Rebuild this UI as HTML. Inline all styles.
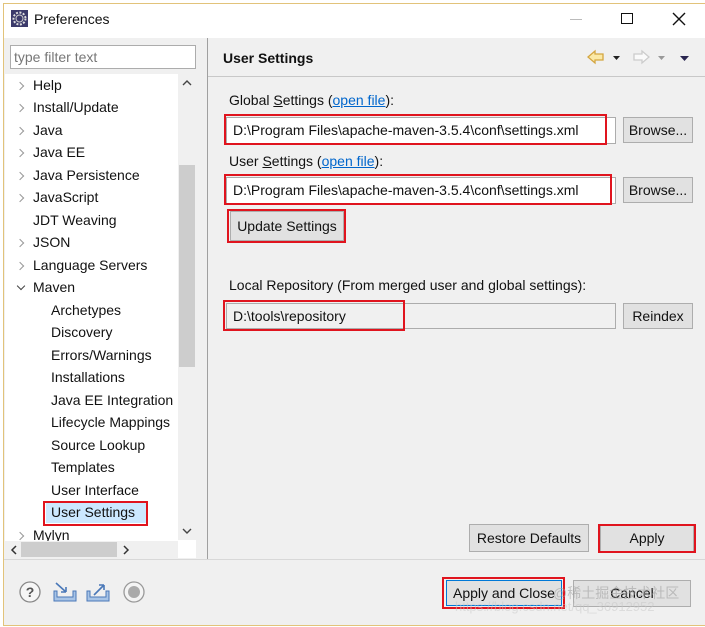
<!DOCTYPE html>
<html><head><meta charset="utf-8"><style>
*{box-sizing:border-box;margin:0;padding:0}
body{width:705px;height:627px;background:#fff;position:relative;overflow:hidden;font-family:"Liberation Sans","Noto Sans CJK SC",sans-serif;font-size:14px;color:#111}
.a{position:absolute;white-space:nowrap}
.red{position:absolute;border:2px solid #e0141e}
.btn{position:absolute;background:#e1e1e1;border:1px solid #adadad;text-align:center}
.inp{position:absolute;background:#fff;border:1px solid #acacac;padding-left:6px}
.t{position:absolute;white-space:nowrap;line-height:20px}
.ch{position:absolute;width:8px;height:10px;background:
 none}
.ch::before{content:"";position:absolute;left:0;top:2px;width:5px;height:5px;border-right:1.3px solid #999;border-bottom:1.3px solid #999;transform:rotate(-45deg)}
.dn::before{transform:rotate(45deg);top:0;border-color:#444}
u{text-decoration:underline}
a{color:#0066cc;text-decoration:underline}
</style></head><body>
<div class="a" style="left:3px;top:3px;width:702px;height:623px;border:1px solid #e2c37a;border-right:none;background:#f0f0f0"></div>
<div class="a" style="left:4px;top:4px;width:701px;height:34px;background:#fff"></div>
<svg class="a" style="left:11px;top:10px" width="17" height="17" viewBox="0 0 17 17"><rect x="0" y="0" width="17" height="17" fill="#3b3a6a"/><circle cx="8.5" cy="8.5" r="6" fill="none" stroke="#ddd" stroke-width="2" stroke-dasharray="2 1.5"/><circle cx="8.5" cy="8.5" r="3.5" fill="#3b3a6a" stroke="#ccc"/></svg>
<div class="t" style="left:34px;top:9px;font-size:14px">Preferences</div>
<div class="a" style="left:570px;top:19px;width:12px;height:1px;background:#bbb"></div>
<div class="a" style="left:621px;top:13px;width:12px;height:11px;border:1.5px solid #111"></div>
<svg class="a" style="left:672px;top:12px" width="14" height="14"><path d="M1 1L13 13M13 1L1 13" stroke="#111" stroke-width="1.4"/></svg>

<div class="a" style="left:5px;top:38px;width:202px;height:522px;background:#f0f0f0"></div>
<div class="inp" style="left:10px;top:45px;width:186px;height:24px;color:#777;line-height:22px;padding-left:3px">type filter text</div>
<div class="a" style="left:5px;top:74px;width:191px;height:484px;background:#fff"></div>
<div class="a" style="left:178px;top:74px;width:18px;height:466px;background:#f0f0f0"></div>
<div class="a" style="left:179px;top:165px;width:16px;height:202px;background:#cdcdcd"></div>
<svg class="a" style="left:181px;top:78px" width="12" height="10"><path d="M2 7L6 3L10 7" stroke="#444" stroke-width="1.4" fill="none"/></svg>
<svg class="a" style="left:181px;top:526px" width="12" height="10"><path d="M2 3L6 7L10 3" stroke="#444" stroke-width="1.4" fill="none"/></svg>
<div class="a" style="left:5px;top:541px;width:173px;height:17px;background:#f0f0f0"></div>
<div class="a" style="left:21px;top:542px;width:96px;height:15px;background:#cdcdcd"></div>
<svg class="a" style="left:9px;top:544px" width="10" height="12"><path d="M7 2L3 6L7 10" stroke="#333" stroke-width="1.5" fill="none"/></svg>
<svg class="a" style="left:121px;top:544px" width="10" height="12"><path d="M3 2L7 6L3 10" stroke="#333" stroke-width="1.5" fill="none"/></svg>

<div class="ch" style="left:17px;top:81px"></div><div class="t" style="left:33px;top:75px">Help</div>
<div class="ch" style="left:17px;top:103px"></div><div class="t" style="left:33px;top:97px">Install/Update</div>
<div class="ch" style="left:17px;top:126px"></div><div class="t" style="left:33px;top:120px">Java</div>
<div class="ch" style="left:17px;top:148px"></div><div class="t" style="left:33px;top:142px">Java EE</div>
<div class="ch" style="left:17px;top:171px"></div><div class="t" style="left:33px;top:165px">Java Persistence</div>
<div class="ch" style="left:17px;top:193px"></div><div class="t" style="left:33px;top:187px">JavaScript</div>
<div class="t" style="left:33px;top:210px">JDT Weaving</div>
<div class="ch" style="left:17px;top:238px"></div><div class="t" style="left:33px;top:232px">JSON</div>
<div class="ch" style="left:17px;top:261px"></div><div class="t" style="left:33px;top:255px">Language Servers</div>
<div class="ch dn" style="left:18px;top:283px"></div><div class="t" style="left:33px;top:277px">Maven</div>
<div class="t" style="left:51px;top:300px">Archetypes</div>
<div class="t" style="left:51px;top:322px">Discovery</div>
<div class="t" style="left:51px;top:345px">Errors/Warnings</div>
<div class="t" style="left:51px;top:367px">Installations</div>
<div class="t" style="left:51px;top:390px">Java EE Integration</div>
<div class="t" style="left:51px;top:412px">Lifecycle Mappings</div>
<div class="t" style="left:51px;top:435px">Source Lookup</div>
<div class="t" style="left:51px;top:457px">Templates</div>
<div class="t" style="left:51px;top:480px">User Interface</div>
<div class="a" style="left:46px;top:502px;width:100px;height:21px;background:#cce8ff"></div>
<div class="t" style="left:51px;top:502px">User Settings</div>
<div class="red" style="left:43px;top:501px;width:105px;height:25px"></div>
<div class="ch" style="left:17px;top:531px"></div><div class="t" style="left:33px;top:525px;height:16px;overflow:hidden">Mylyn</div>

<div class="a" style="left:207px;top:38px;width:1px;height:522px;background:#a0a0a0"></div>

<div class="t" style="left:223px;top:48px;font-weight:bold">User Settings</div>
<div class="a" style="left:208px;top:76px;width:497px;height:1px;background:#c8c8c8"></div>
<svg class="a" style="left:586px;top:48px" width="110" height="18" viewBox="0 0 110 18"><path d="M2 9L9 3V6H17V12H9V15Z" fill="#fbe9a6" stroke="#d4a640" stroke-width="1.3"/><path d="M27 8h7l-3.5 4z" fill="#222"/><path d="M63 9L56 3V6H48V12H56V15Z" fill="#fafafa" stroke="#ccc" stroke-width="1.3"/><path d="M72 8h7l-3.5 4z" fill="#999"/><path d="M94 8h9l-4.5 5z" fill="#2a2650"/></svg>

<div class="t" style="left:229px;top:90px">Global <u>S</u>ettings (<a>open file</a>):</div>
<div class="inp" style="left:226px;top:117px;width:390px;height:27px;line-height:25px">D:\Program Files\apache-maven-3.5.4\conf\settings.xml</div>
<div class="red" style="left:224px;top:114px;width:383px;height:31px"></div>
<div class="btn" style="left:623px;top:117px;width:70px;height:26px;line-height:24px">Browse...</div>

<div class="t" style="left:229px;top:151px">User <u>S</u>ettings (<a>open file</a>):</div>
<div class="inp" style="left:226px;top:177px;width:390px;height:27px;line-height:25px">D:\Program Files\apache-maven-3.5.4\conf\settings.xml</div>
<div class="red" style="left:224px;top:174px;width:388px;height:31px"></div>
<div class="btn" style="left:623px;top:177px;width:70px;height:26px;line-height:24px">Browse...</div>

<div class="btn" style="left:230px;top:211px;width:114px;height:30px;line-height:28px">Update Settings</div>
<div class="red" style="left:227px;top:209px;width:119px;height:34px"></div>

<div class="t" style="left:229px;top:275px">Local Repository (From merged user and global settings):</div>
<div class="inp" style="left:226px;top:303px;width:390px;height:26px;line-height:24px;background:#f0f0f0">D:\tools\repository</div>
<div class="red" style="left:223px;top:300px;width:182px;height:31px"></div>
<div class="btn" style="left:623px;top:303px;width:70px;height:26px;line-height:24px">Reindex</div>

<div class="btn" style="left:469px;top:524px;width:120px;height:28px;line-height:26px">Restore Defaults</div>
<div class="btn" style="left:600px;top:525px;width:94px;height:27px;line-height:25px">Apply</div>
<div class="red" style="left:598px;top:524px;width:98px;height:29px"></div>

<div class="a" style="left:4px;top:559px;width:701px;height:1px;background:#d8d8d8"></div>
<svg class="a" style="left:14px;top:579px" width="140" height="26" viewBox="0 0 140 26"><circle cx="16" cy="13" r="10" fill="#f6f6f6" stroke="#888" stroke-width="1.3"/><text x="16" y="18" font-family="Liberation Sans" font-weight="bold" font-size="14" fill="#555" text-anchor="middle">?</text><path d="M40 12v10h22V12h-3v6H43v-6z" fill="#a8c4e6" stroke="#4a78b8"/><path d="M42 4l10 9m0 0h-5m5 0v-5" stroke="#4a78b8" stroke-width="1.6" fill="none"/><path d="M73 12v10h22V12h-3v6H76v-6z" fill="#a8c4e6" stroke="#4a78b8"/><path d="M80 16l10-10m0 0h-5m5 0v5" stroke="#4a78b8" stroke-width="1.6" fill="none"/><circle cx="120" cy="13" r="10" fill="#f4f4f4" stroke="#999" stroke-width="1.3"/><circle cx="120" cy="13" r="6" fill="#aaa"/></svg>

<div class="btn" style="left:446px;top:580px;width:116px;height:26px;line-height:24px;border-color:#0078d7">Apply and Close</div>
<div class="red" style="left:442px;top:577px;width:123px;height:32px"></div>
<div class="btn" style="left:573px;top:580px;width:118px;height:27px;line-height:25px">Cancel</div>
<div class="t" style="left:553px;top:583px;color:rgba(160,160,160,.6);font-size:14px">@稀土掘金技术社区</div>
<div class="t" style="left:455px;top:597px;color:rgba(200,200,200,.5);font-size:13px">https://blog.csdn.net/qq_36912952</div>
</body></html>
